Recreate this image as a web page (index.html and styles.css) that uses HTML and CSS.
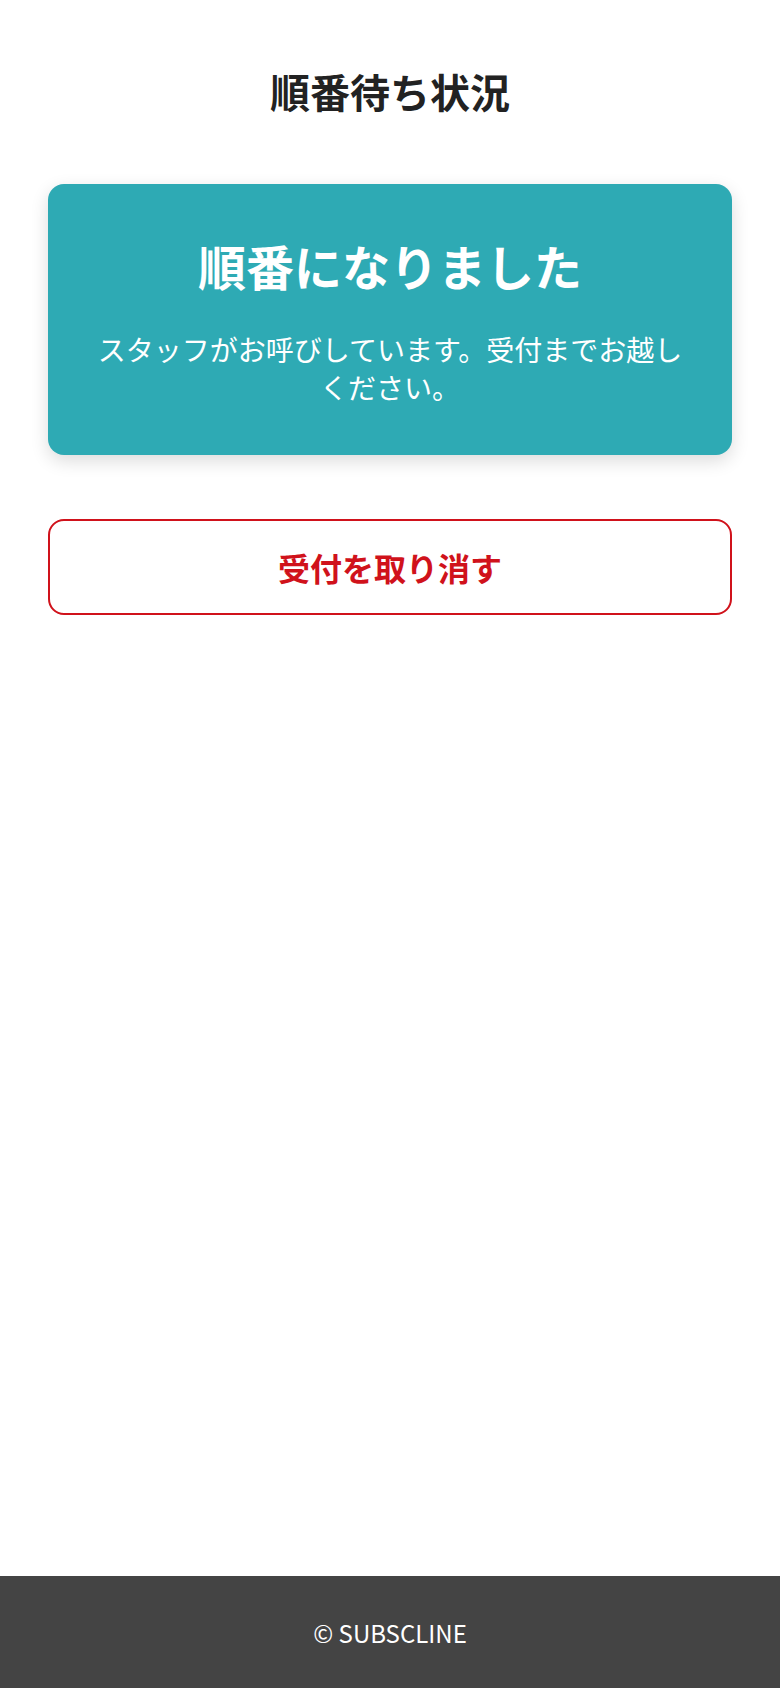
FILE: index.html
```html
<!DOCTYPE html>
<html lang="ja">
<head>
    <meta charset="UTF-8">
    <meta name="viewport" content="width=device-width, initial-scale=1.0">
    <title>順番待ち状況</title>
    <link rel="stylesheet" href="styles.css">
</head>
<body>

    <div class="page">
        <main class="container">
            <h1 class="page-title">順番待ち状況</h1>

            <div class="status-card">
                <h2>順番になりました</h2>
                <p>スタッフがお呼びしています。受付までお越しください。</p>
            </div>

            <button class="cancel-button" onclick="cancelEntry()">受付を取り消す</button>
        </main>

        <footer class="footer">© SUBSCLINE</footer>
    </div>

    <script>
        function cancelEntry() {
            // 確認してから取り消す
            if (confirm("受付を取り消しますか？")) {
                alert("受付を取り消しました。");
            }
        }
    </script>

</body>
</html>
```

FILE: styles.css
```css
body {
    font-family: "Noto Sans CJK JP", "Noto Sans", sans-serif;
    margin: 0;
    background-color: #ffffff;
    color: #222222;
}

.page {
    display: flex;
    flex-direction: column;
    min-height: 100vh;
}

.container {
    padding: 61px 48px 0;
    display: flex;
    flex-direction: column;
}

.page-title {
    margin: 0 0 63px;
    font-size: 40px;
    font-weight: 700;
    line-height: 60px;
    text-align: center;
}

.status-card {
    background-color: #2eaab4;
    border-radius: 16px;
    padding: 48px 40px 49px;
    box-shadow: 0 6px 18px rgba(0, 0, 0, 0.14);
    color: #ffffff;
    text-align: center;
}

.status-card h2 {
    margin: 0 0 31px;
    font-size: 48px;
    font-weight: 700;
    line-height: 1.4;
}

.status-card p {
    margin: 0;
    font-size: 28px;
    line-height: 38px;
}

.cancel-button {
    margin-top: 64px;
    height: 96px;
    font-family: inherit;
    font-size: 32px;
    font-weight: 700;
    color: #d0121b;
    background-color: #ffffff;
    border: 2px solid #d0121b;
    border-radius: 16px;
    cursor: pointer;
}

.cancel-button:hover {
    background-color: #fff4f4;
}

.footer {
    margin-top: auto;
    height: 112px;
    display: flex;
    align-items: center;
    justify-content: center;
    background-color: #444444;
    color: #ffffff;
    font-size: 24px;
}
```
